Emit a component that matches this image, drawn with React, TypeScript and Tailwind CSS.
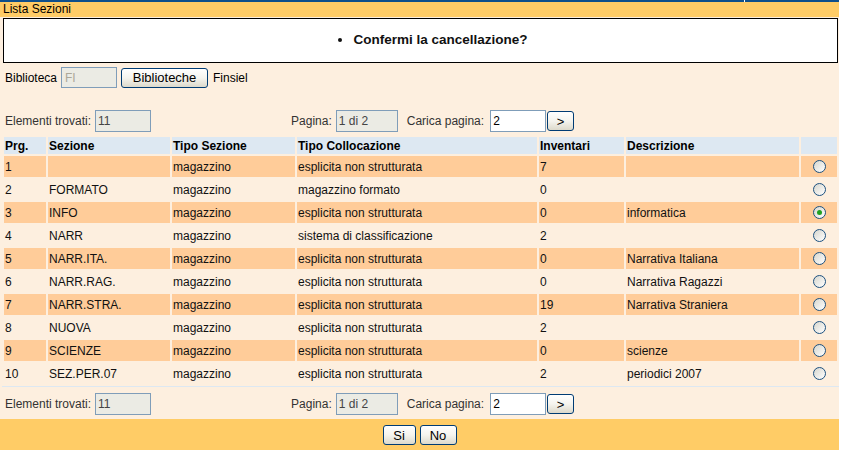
import React from "react";

const rows = [
  ["1", "", "magazzino", "esplicita non strutturata", "7", ""],
  ["2", "FORMATO", "magazzino", "magazzino formato", "0", ""],
  ["3", "INFO", "magazzino", "esplicita non strutturata", "0", "informatica"],
  ["4", "NARR", "magazzino", "sistema di classificazione", "2", ""],
  ["5", "NARR.ITA.", "magazzino", "esplicita non strutturata", "0", "Narrativa Italiana"],
  ["6", "NARR.RAG.", "magazzino", "esplicita non strutturata", "0", "Narrativa Ragazzi"],
  ["7", "NARR.STRA.", "magazzino", "esplicita non strutturata", "19", "Narrativa Straniera"],
  ["8", "NUOVA", "magazzino", "esplicita non strutturata", "2", ""],
  ["9", "SCIENZE", "magazzino", "esplicita non strutturata", "0", "scienze"],
  ["10", "SEZ.PER.07", "magazzino", "esplicita non strutturata", "2", "periodici 2007"],
];

const headers = ["Prg.", "Sezione", "Tipo Sezione", "Tipo Collocazione", "Inventari", "Descrizione", ""];

function XpButton({ children, className }: { children: React.ReactNode; className: string }) {
  return (
    <div
      className={
        "flex items-center justify-center rounded-[3px] border border-[#003c74] bg-gradient-to-b from-white via-[#f5f4ee] to-[#dcd9cb] text-[13px] leading-none text-black " +
        className
      }
    >
      {children}
    </div>
  );
}

function Radio({ checked }: { checked: boolean }) {
  return (
    <div className="flex h-[13px] w-[13px] items-center justify-center rounded-full border border-[#1c5180] bg-gradient-to-br from-[#d6d6ce] to-white">
      {checked && <div className="h-[5px] w-[5px] rounded-full bg-[#21a121]" />}
    </div>
  );
}

function PagerRow() {
  return (
    <div className="flex h-[22px] items-center pl-[5px] text-[12px] text-[#333]">
      <span>Elementi trovati:</span>
      <div className="ml-[4px] flex h-[22px] w-[56px] items-center border border-[#7f9db9] bg-[#ebebe4] pl-[2px] text-[#444]">11</div>
      <span className="ml-[140px]">Pagina:</span>
      <div className="ml-[4px] flex h-[22px] w-[62px] items-center border border-[#7f9db9] bg-[#ebebe4] pl-[2px] text-[#444]">1 di 2</div>
      <span className="ml-[9px]">Carica pagina:</span>
      <div className="ml-[6px] flex h-[22px] w-[56px] items-center border border-[#7f9db9] bg-white pl-[2px] text-black">2</div>
      <XpButton className="ml-[1px] h-[20px] w-[27px] text-[12px]">&gt;</XpButton>
    </div>
  );
}

export default function App() {
  return (
    <div className="min-h-screen bg-white font-['Liberation_Sans',Arial,sans-serif]">
      <div className="w-[839px] bg-[#fdefdf]">
        <div className="relative h-[2px] bg-[#0e4f8b]">
          <div className="absolute left-[744px] top-0 h-[2px] w-[1px] bg-white" />
        </div>
        <div className="h-[15px] bg-[#ffcc66] pl-[3px] text-[12px] leading-[15px] text-black">Lista Sezioni</div>
        <div className="ml-[3px] mt-[1px] flex h-[45px] w-[835px] items-center justify-center border border-black bg-white">
          <ul className="list-disc pl-[40px] text-[13.5px] font-bold text-[#111]">
            <li>Confermi la cancellazione?</li>
          </ul>
        </div>
        <div className="mt-[4px] flex h-[21px] items-center pl-[5px] text-[12px] text-black">
          <span>Biblioteca</span>
          <div className="ml-[4px] flex h-[21px] w-[56px] items-center border border-[#7f9db9] bg-[#ebebe4] pl-[3px] text-[#aca899]">FI</div>
          <XpButton className="ml-[4px] h-[20px] w-[87px]">Biblioteche</XpButton>
          <span className="ml-[5px]">Finsiel</span>
        </div>
        <div className="mt-[22px]">
          <PagerRow />
        </div>
        <div className="ml-[2px] mt-[3px] w-[837px] border-b border-[#dde8f2]">
          <div className="grid grid-cols-[42px_122px_123px_240px_85px_173px_36px] gap-[2px] p-[2px] text-[12px]">
            {headers.map((h, i) => (
              <div key={i} className="flex h-[17px] items-center bg-[#dde8f2] pl-[1px] font-bold text-black">
                {h}
              </div>
            ))}
            {rows.map((r, ri) => {
              const bg = ri % 2 === 0 ? "bg-[#ffcc99]" : "";
              return (
                <React.Fragment key={ri}>
                  {r.map((c, ci) => (
                    <div key={ci} className={"flex h-[21px] items-center pl-[1px] text-[#111] " + bg}>
                      {c}
                    </div>
                  ))}
                  <div className={"flex h-[21px] items-center justify-center " + bg}>
                    <Radio checked={ri === 2} />
                  </div>
                </React.Fragment>
              );
            })}
          </div>
        </div>
        <div className="mt-[6px]">
          <PagerRow />
        </div>
        <div className="mt-[4px] flex h-[31px] items-center justify-center gap-[4px] bg-[#ffcc66] pt-[1px]">
          <XpButton className="h-[20px] w-[33px]">Si</XpButton>
          <XpButton className="h-[20px] w-[37px]">No</XpButton>
        </div>
      </div>
    </div>
  );
}
